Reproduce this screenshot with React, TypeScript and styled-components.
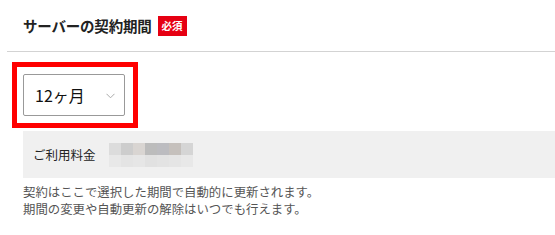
import styled, { createGlobalStyle } from "styled-components";

const GlobalStyle = createGlobalStyle`
  body {
    margin: 0;
    background: #fff;
    font-family: "Noto Sans CJK JP", "Noto Sans", sans-serif;
    color: #222;
  }
`;

const Page = styled.div`
  width: 555px;
  height: 235px;
  overflow: hidden;
`;

const Header = styled.div`
  margin-left: 7px;
  height: 52px;
  padding-left: 16px;
  display: flex;
  align-items: center;
  gap: 6px;
  border-bottom: 1px solid #d3d3d3;
  box-sizing: border-box;
`;

const Title = styled.h2`
  margin: 0;
  font-size: 14.5px;
  font-weight: 700;
  color: #222;
  letter-spacing: -0.2px;
`;

const Badge = styled.span`
  display: inline-flex;
  align-items: center;
  justify-content: center;
  width: 29px;
  height: 20px;
  background: #e60012;
  color: #fff;
  font-size: 10.5px;
  font-weight: 700;
`;

const Body = styled.div`
  padding: 10px 0 0 12px;
`;

const Highlight = styled.div`
  display: inline-flex;
  border: 5px solid #ff0000;
  padding: 7px 8px 7px 6px;
`;

const Select = styled.div`
  width: 102px;
  height: 42px;
  box-sizing: border-box;
  border: 1px solid #999;
  border-radius: 2px;
  display: flex;
  align-items: center;
  justify-content: space-between;
  padding: 0 9px 0 11px;
  font-size: 16px;
  color: #111;
`;

const Chevron = styled.svg`
  width: 9px;
  height: 6px;
  margin-top: 2px;
`;

const FeeBox = styled.div`
  margin: 3px 0 0 11px;
  height: 47px;
  background: #f0f0f0;
  display: flex;
  align-items: center;
  padding-left: 10px;
  gap: 13px;
`;

const FeeLabel = styled.span`
  font-size: 12.5px;
  color: #222;
`;

const Mosaic = styled.div`
  display: grid;
  grid-template-columns: repeat(7, 12px);
  grid-auto-rows: 12px;
`;

const Cell = styled.div<{ $c: string }>`
  background: ${(p) => p.$c};
`;

const Notes = styled.p`
  margin: 6px 0 0 11px;
  font-size: 12.4px;
  line-height: 17px;
  color: #555;
`;

const mosaic = [
  "#dcdcdc", "#cdcdcd", "#d9d5d2", "#bcbcbc", "#bcbcc0", "#c5c0bc", "#d5d5d5",
  "#e8e8e8", "#e4e4e4", "#e6e6e6", "#e1e1e1", "#e3e3e3", "#e5e5e5", "#e8e8e8",
];

export default function App() {
  return (
    <Page>
      <GlobalStyle />
      <Header>
        <Title>サーバーの契約期間</Title>
        <Badge>必須</Badge>
      </Header>
      <Body>
        <Highlight>
          <Select>
            <span>12ヶ月</span>
            <Chevron viewBox="0 0 9 6">
              <path d="M0.5 0.8 L4.5 4.8 L8.5 0.8" fill="none" stroke="#aaa" strokeWidth="1" />
            </Chevron>
          </Select>
        </Highlight>
        <FeeBox>
          <FeeLabel>ご利用料金</FeeLabel>
          <Mosaic>
            {mosaic.map((c, i) => (
              <Cell key={i} $c={c} />
            ))}
          </Mosaic>
        </FeeBox>
        <Notes>
          契約はここで選択した期間で自動的に更新されます。
          <br />
          期間の変更や自動更新の解除はいつでも行えます。
        </Notes>
      </Body>
    </Page>
  );
}
